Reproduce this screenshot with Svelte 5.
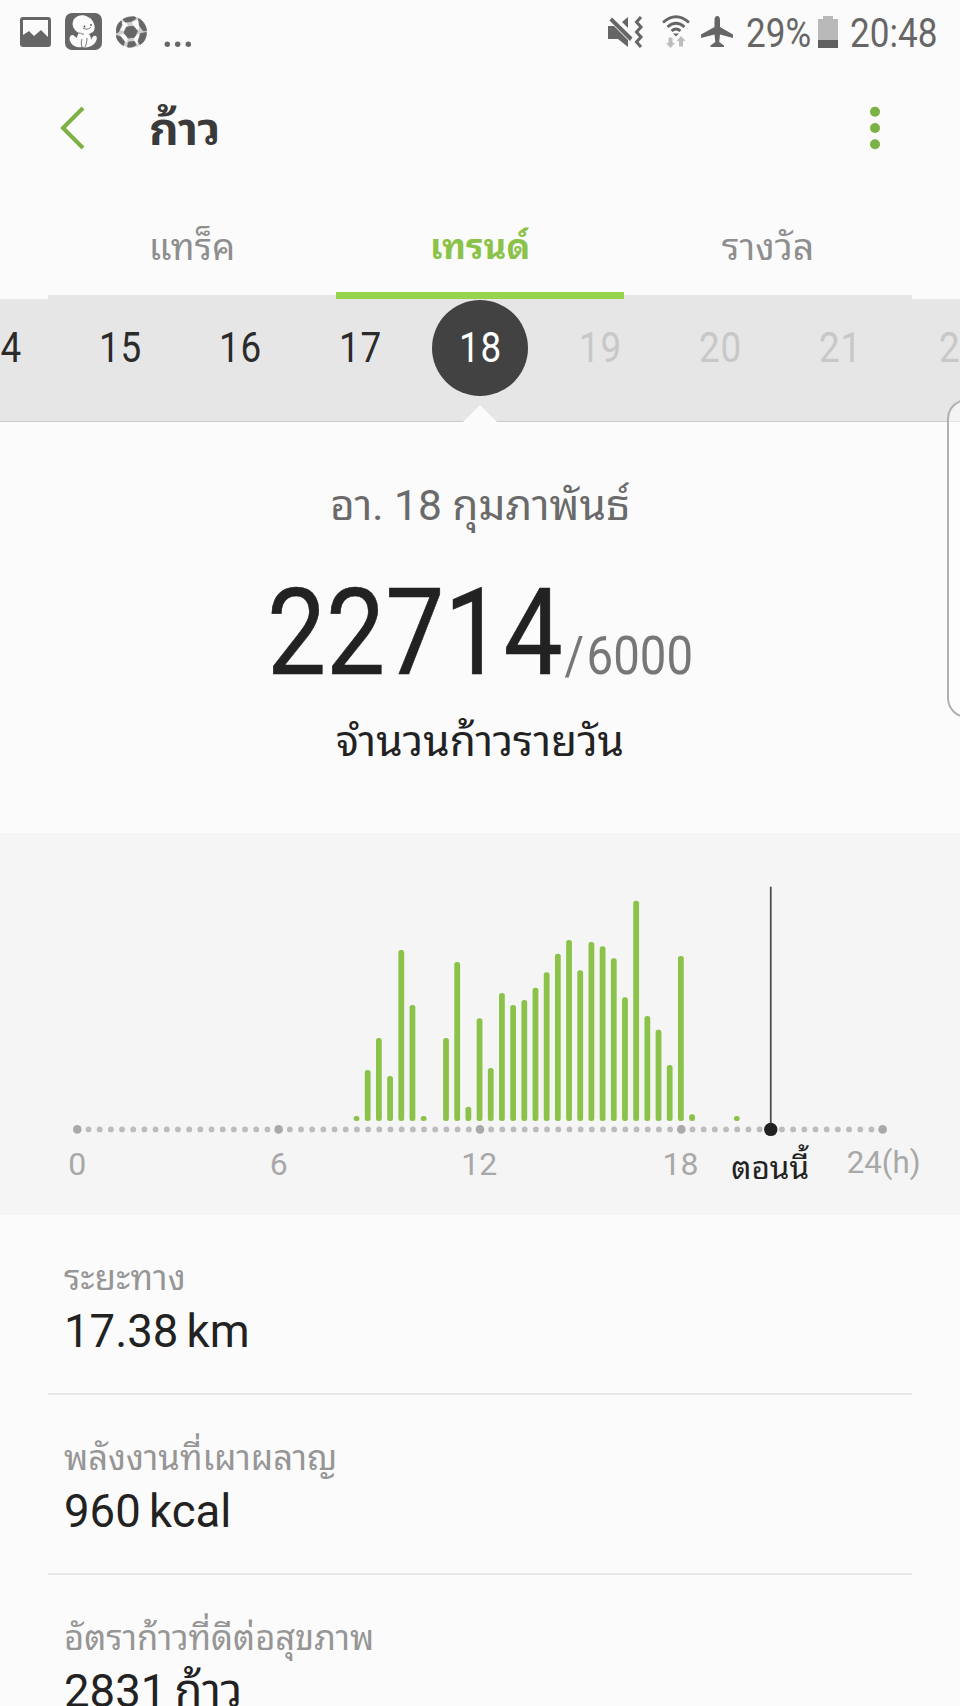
<script lang="ts">
  const tabs = [
    { id: "track", label: "แทร็ค" },
    { id: "trend", label: "เทรนด์" },
    { id: "reward", label: "รางวัล" },
  ];
  let activeTab = $state("trend");

  const days = [14, 15, 16, 17, 18, 19, 20, 21, 22];
  let selectedDay = $state(18);

  // one slot per 20 minutes, value is the bar height
  const bars: [number, number][] = [
    [25, 5], [26, 51], [27, 83], [28, 45], [29, 171], [30, 116], [31, 5],
    [33, 83], [34, 159], [35, 14.3], [36, 102.7], [37, 53], [38, 128],
    [39, 116], [40, 121], [41, 133.3], [42, 148.7], [43, 167.3], [44, 181],
    [45, 150.7], [46, 179], [47, 174.7], [48, 162.7], [49, 123.7], [50, 220.3],
    [51, 105], [52, 91.3], [53, 56], [54, 165], [55, 6.7], [59, 5],
  ];
  const slots = Array.from({ length: 73 }, (_, i) => i);
  const now = 62;

  function slotX(i: number) {
    return 77.3 + i * 11.185;
  }

  const details = [
    { id: "distance", label: "ระยะทาง", value: "17.38", unit: "km" },
    { id: "energy", label: "พลังงานที่เผาผลาญ", value: "960", unit: "kcal" },
    { id: "healthy", label: "อัตราก้าวที่ดีต่อสุขภาพ", value: "2831", unit: "ก้าว" },
  ];
</script>

<div class="screen">
  <div class="status">
    <svg class="left-icons" width="200" height="66" viewBox="0 0 200 66">
      <path fill="#666" fill-rule="evenodd" d="M23 17h25a3 3 0 0 1 3 3v24a3 3 0 0 1-3 3H23a3 3 0 0 1-3-3V20a3 3 0 0 1 3-3zm0 3v15l6-4 5 5 7-6 7 7V20z" />
      <rect x="65" y="13" width="37" height="37" rx="7" fill="#666" />
      <path fill="#fbfbfb" d="M74 19c3-4 10-5 14-2 3 1 5 4 6 7 1 3 1 6-1 8l-4 2c2 2 2 5 2 6 1-3 3-5 5-4 2 2 0 6-2 8-3 3-8 4-12 3-5 1-9-1-11-4-2-3-2-7 1-8 2 0 3 2 5 3 0-2 1-4 2-5-6-3-8-9-5-14z" />
      <path fill="none" stroke="#666" stroke-width="0.900" d="M83 28c3 2 6 1 8-1M79 33c2 0 4 2 5 1M82 39c-1 3-1 5 0 8M87 38c0 4-1 7-2 9" />
      <circle cx="84.500" cy="26.500" r="0.900" fill="#555" />
      <circle cx="91" cy="25" r="0.900" fill="#555" />
      <circle cx="131.500" cy="32" r="15.700" fill="#cfcfcf" />
      <g fill="#fbfbfb">
        <path d="M121 23l5-2 2 5-4 5-4-1z" />
        <path d="M132 22l6-2 3 5-3 5-5-4z" />
        <path d="M119 35l4-1 5 3-1 5-5 1z" />
        <path d="M134 37l5-3 3 4-5 6-3-3z" />
      </g>
      <g fill="#666" stroke="#666" stroke-width="0.800">
        <path d="M126.500 27l7-.8 4 5-3 6-6.500.8-4-5.500z" />
        <path d="M123 19.500c3-2 8-3 12-2.500l1 1.500-5 3-5.500.7z" />
        <path d="M138.500 18.500c4 2 7.500 7 8 12l-3 .500-4-5z" />
        <path d="M116.500 29c.5-4 2.500-6.500 4.500-8l1 4-3.500 7-2 1z" />
        <path d="M140.500 33.500l5.800-1c0 5-2 9.500-6.300 12l-2-3z" />
        <path d="M116.500 35.500l4 1 4 5-1 4c-4-2-7-6-7-10z" />
        <path d="M128.500 42l6-.5 1.500 3.500c-3 2-6 2.500-8.500 2z" />
      </g>
      <g fill="#666">
        <circle cx="167.300" cy="44.300" r="2.700" />
        <circle cx="177.700" cy="44.300" r="2.700" />
        <circle cx="188.300" cy="44.300" r="2.700" />
      </g>
    </svg>
    <div class="right-status">
      <svg width="130" height="66" viewBox="606 0 130 66">
        <g fill="#666">
          <path d="M608 26h6l14 14v7l-10-8h-10z" />
          <path d="M628 17v11l-6-6z" />
          <path d="M612 17.500l20.500 20-2.500 3.500-20.500-20.500z" />
        </g>
        <path d="M641 17l-4.500 5 4.500 5-4.500 5 4.500 5-4.500 5 4.500 5" fill="none" stroke="#666" stroke-width="3" />
        <g fill="none" stroke="#666" stroke-width="2.800">
          <path d="M663 22.500q13-11.500 26 0" />
          <path d="M667.500 27q8.500-7.500 17 0" />
          <path d="M671.500 31q4.500-4 9 0" />
        </g>
        <path d="M673 33.500h6l-3 3z" fill="#666" />
        <g fill="#bdbdbd">
          <path d="M668.500 37.500h4V43h2.500l-4.500 5-4.500-5h2.500z" />
          <path d="M679 46.500h4V41h2.500l-4.500-5-4.500 5h2.500z" />
        </g>
        <path fill="#666" d="M717.300 16c2 0 2.700 2 2.700 4v7l13 7.500v3.500l-13-3.500-.8 7.500 4.800 3.500V47h-13.500v-1.500l4.800-3.500-.8-7.500-13.500 3.500v-3.500l13.500-7.500v-7c0-2 .8-4 2.800-4z" />
      </svg>
      <span class="battery-text">29%</span>
      <svg class="battery" width="20" height="32" viewBox="0 0 20 32">
        <path fill="#b9b9b9" d="M5 0h10v3h5v21H0V3h5z" />
        <rect y="24" width="20" height="8" fill="#606060" />
      </svg>
      <span class="clock">20:48</span>
    </div>
  </div>

  <header>
    <button class="back" aria-label="ย้อนกลับ">
      <svg width="30" height="48" viewBox="0 0 30 48">
        <path d="M24 4L4 24l20 20" fill="none" stroke="#7cb144" stroke-width="4" />
      </svg>
    </button>
    <h1>ก้าว</h1>
    <button class="more" aria-label="เพิ่มเติม">
      <svg width="12" height="44" viewBox="0 0 12 44">
        <circle cx="6" cy="5.700" r="5" />
        <circle cx="6" cy="22" r="5" />
        <circle cx="6" cy="38.200" r="5" />
      </svg>
    </button>
  </header>

  <nav>
    {#each tabs as tab (tab.id)}
      <button class="tab {tab.id}" class:active={activeTab === tab.id} onclick={() => (activeTab = tab.id)}>
        <span>{tab.label}</span>
      </button>
    {/each}
  </nav>

  <div class="days">
    {#each days as day}
      <button class="day" class:future={day > 18} class:selected={day === selectedDay} onclick={() => (selectedDay = day)}>
        <span>{day}</span>
      </button>
    {/each}
    <svg class="pointer" width="34" height="17" viewBox="0 0 34 17">
      <path d="M0 17L17 0l17 17z" fill="#fbfbfb" />
    </svg>
  </div>

  <section class="summary">
    <p class="date"><span>อา. 18 กุมภาพันธ์</span></p>
    <p class="count"><span class="steps">22714</span><span class="goal"><span class="slash">/</span>6000</span></p>
    <p class="caption"><span>จำนวนก้าวรายวัน</span></p>
  </section>

  <section class="chart">
    <svg width="960" height="382" viewBox="0 833 960 382">
      {#each bars as [slot, height]}
        <rect x={slotX(slot) - 3.3} y={1121 - height} width="5.800" {height} rx="2.500" fill="#8bc34a" />
      {/each}
      {#each slots as slot}
        <circle cx={slotX(slot)} cy="1129.400" r={slot % 18 === 0 ? 4.3 : 2.9} fill={slot % 18 === 0 ? "#a9a9a9" : "#bcbcbc"} />
      {/each}
      <line x1={slotX(now)} x2={slotX(now)} y1="886.700" y2="1129" stroke="#505050" stroke-width="1.800" />
      <circle cx={slotX(now)} cy="1129.400" r="6.700" fill="#222" />
      <g class="axis">
        <text x={slotX(0)} y="1175">0</text>
        <text x={slotX(18)} y="1175">6</text>
        <text x={slotX(36) - 0.7} y="1175">12</text>
        <text x={slotX(54) - 0.7} y="1175">18</text>
        <text class="end" x={slotX(72) + 1} y="1173.300">24(h)</text>
        <text class="now" x={slotX(now) - 0.5} y="1178.700">ตอนนี้</text>
      </g>
    </svg>
  </section>

  <section class="details">
    {#each details as item (item.id)}
      <div class="detail">
        <p class="label {item.id}"><span>{item.label}</span></p>
        <p class="value">{item.value} <span>{item.unit}</span></p>
      </div>
    {/each}
  </section>

  <div class="edge-handle"></div>
</div>

<style>
  :global(body) {
    background: #fbfbfb;
  }

  .screen {
    position: relative;
    width: 960px;
    height: 1706px;
    overflow: hidden;
    background: #fbfbfb;
    color: #222;
    font-family: Roboto, "Noto Sans Thai Looped", "Noto Looped Thai", "Noto Sans Thai UI", Loma, Waree, "Noto Sans Thai", "Noto Sans", sans-serif;
  }

  p, h1 {
    margin: 0;
    white-space: nowrap;
  }

  button {
    padding: 0;
    border: 0;
    background: none;
    color: inherit;
    font: inherit;
  }

  svg {
    display: block;
    flex: none;
  }

  .status {
    display: flex;
    justify-content: space-between;
    height: 66px;
    color: #666;
    font-size: 40px;
    line-height: 68px;
  }

  .right-status {
    display: flex;
    width: 354px;
  }

  .battery-text, .clock {
    transform: scaleX(0.877);
    transform-origin: 0 0;
  }

  .battery-text {
    width: 72px;
    margin-left: 10px;
  }

  .battery {
    margin-top: 16px;
  }

  .clock {
    margin-left: 12px;
    width: 100px;
  }

  header {
    display: flex;
    align-items: center;
    height: 124px;
    padding: 0 79.5px 0 59px;
  }

  .more {
    margin-left: auto;
    fill: #7cb144;
  }

  h1 {
    padding-top: 2px;
    margin-left: 60px;
    color: #3a3a3a;
    font-size: 46px;
    font-weight: 700;
    line-height: 60px;
  }

  nav {
    display: flex;
    height: 109px;
    margin: 0 48px;
    background: linear-gradient(#e6e6e6, #e6e6e6) bottom / 100% 4px no-repeat;
  }

  .tab {
    flex: 1;
    box-sizing: border-box;
    color: #8e8e8e;
    font-size: 36.5px;
    line-height: 115px;
  }

  .tab.reward {
    font-size: 37.5px;
  }

  .tab.active {
    border-bottom: 7px solid #97d44e;
    color: #8bc34a;
    font-size: 35px;
    font-weight: 700;
  }

  .days {
    position: relative;
    display: flex;
    justify-content: center;
    box-sizing: border-box;
    width: 1080px;
    height: 123px;
    margin-left: -60px;
    padding-top: 1px;
    border-bottom: 1px solid #cacaca;
    background: #e6e6e6;
  }

  .day {
    flex: none;
    width: 96px;
    height: 96px;
    margin: 0 12px;
    border-radius: 50%;
    color: #2b2b2b;
    font-size: 42px;
    letter-spacing: 1px;
    line-height: 96px;
    text-indent: 1px;
  }

  .day span {
    display: inline-block;
    transform: scaleX(0.877);
  }

  .day.future {
    color: #c8c8c8;
  }

  .day.selected {
    background: #424242;
    color: #fff;
  }

  .pointer {
    position: absolute;
    bottom: -1px;
    left: 523px;
  }

  .summary {
    height: 411px;
    text-align: center;
  }

  .summary span {
    display: inline-block;
  }

  .date {
    padding-top: 54px;
    color: #6a6a6a;
    font-size: 42.5px;
    line-height: 60px;
  }

  .count {
    height: 120px;
    margin-top: 37px;
    line-height: 120px;
    transform: scaleX(0.877);
  }

  .steps {
    font-size: 120px;
    -webkit-text-stroke: 0.6px #222;
  }

  .goal {
    margin-left: 2px;
    color: #777;
    font-size: 54px;
  }

  .goal .slash {
    margin-right: 3px;
  }

  .caption {
    margin-top: 19px;
    font-size: 42.5px;
    line-height: 60px;
  }

  .chart {
    background: #f5f5f5;
  }

  .axis text {
    fill: #a8a8a8;
    font-size: 32px;
    text-anchor: middle;
  }

  .axis .end {
    font-size: 31.2px;
  }

  .axis .now {
    fill: #222;
    font-size: 31.5px;
  }

  .details {
    margin: 0 48px;
  }

  .detail {
    box-sizing: border-box;
    height: 180px;
    padding: 39px 16px 0;
    border-bottom: 2px solid #e8e8e8;
  }

  .label {
    color: #969696;
    font-size: 34.5px;
    line-height: 49px;
  }

  .label.distance {
    letter-spacing: 0.3px;
  }

  .value {
    font-size: 45.5px;
    line-height: 57px;
    word-spacing: -3px;
  }

  .edge-handle {
    position: absolute;
    top: 399px;
    left: 947px;
    box-sizing: border-box;
    width: 40px;
    height: 319px;
    border: 2px solid #b0b0b0;
    border-radius: 22px;
    background: rgba(255, 255, 255, 0.5);
  }
</style>
